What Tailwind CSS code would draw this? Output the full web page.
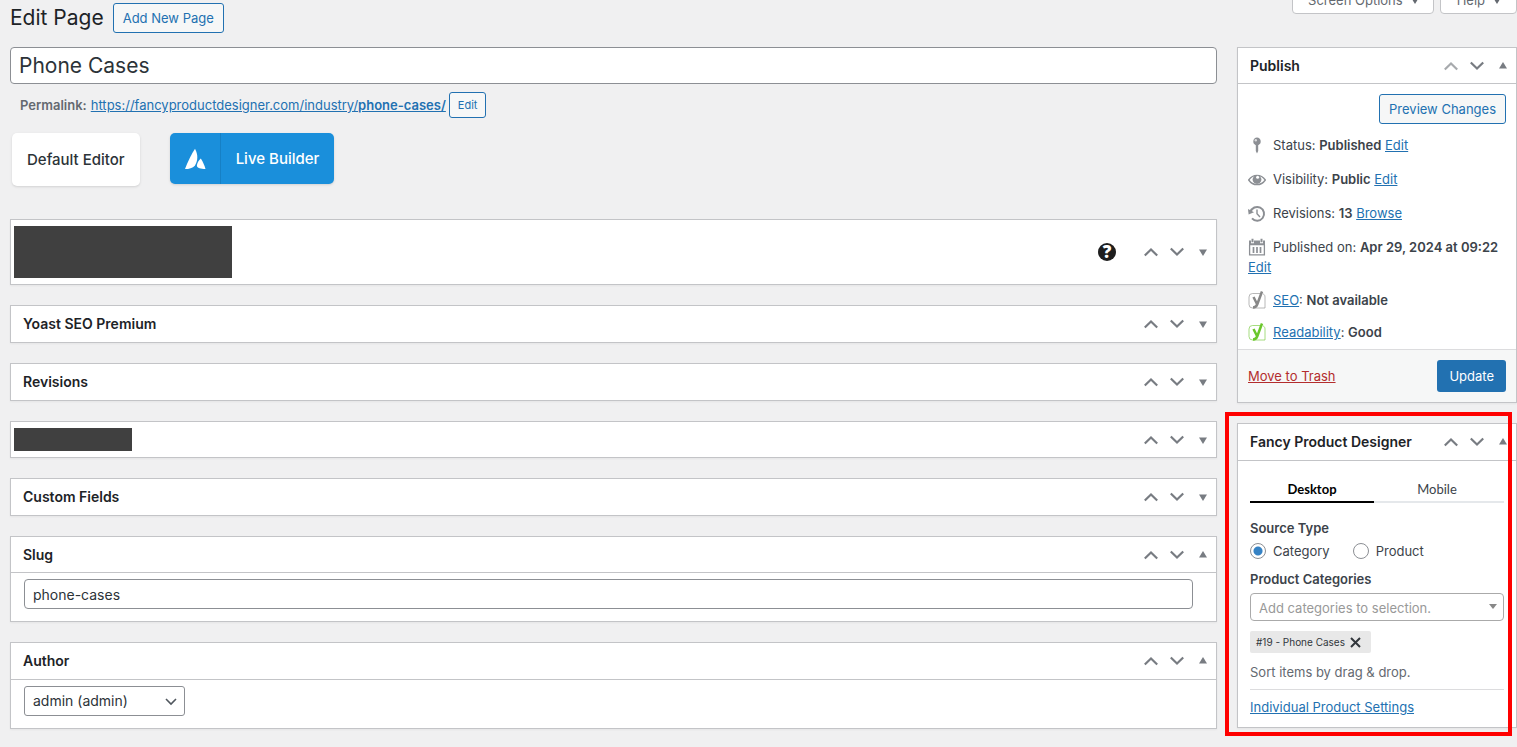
<!DOCTYPE html>
<html lang="en">
<head>
    <meta charset="utf-8">
    <meta name="viewport" content="width=device-width, initial-scale=1">
    <title>Edit Page</title>
    <script src="https://cdn.jsdelivr.net/npm/@tailwindcss/browser@4"></script>
</head>
<body class="min-h-screen overflow-x-hidden bg-[#f0f0f1] font-['Inter',sans-serif] text-[13px] leading-5 text-[#3c434a]">

    <!-- Icons -->
    <svg class="hidden">
        <symbol id="up" viewBox="0 0 14 10"><path d="M.8 8.500L7 2.500l6.200 6" fill="none" stroke="currentColor" stroke-width="2.200"/></symbol>
        <symbol id="down" viewBox="0 0 14 10"><path d="M.8 1.500L7 7.500l6.200-6" fill="none" stroke="currentColor" stroke-width="2.200"/></symbol>
        <symbol id="tri-up" viewBox="0 0 8 8"><path d="M4 0l4 6.500H0z" fill="currentColor"/></symbol>
        <symbol id="tri-down" viewBox="0 0 8 8"><path d="M4 8l4-6.500H0z" fill="currentColor"/></symbol>
        <symbol id="yoast" viewBox="0 0 18 20">
            <path d="M12 3.500H4.500A3.500 3.500 0 0 0 1 7v7.500A3.500 3.500 0 0 0 4.500 18H17V7c0-1.500-.6-2.500-1.800-3.100" fill="none" stroke="currentColor" stroke-opacity=".6"/>
            <path d="M5.500 7l3.500 7M14 1.500L9.300 14.200C8.500 16.500 7.300 17.400 5 17.400" fill="none" stroke="currentColor" stroke-width="2.500"/>
        </symbol>
    </svg>

    <div class="pl-[10px]">
        <header class="flex items-start justify-between">
            <div class="flex items-center gap-[9px] pt-[3px]">
                <h1 class="text-[21px] leading-[30px] text-[#1d2327]">Edit Page</h1>
                <a href="#" class="rounded-[3px] border border-[#2271b1] bg-[#f6f7f7] px-[9px] leading-[28px] text-[#2271b1]">Add New Page</a>
            </div>
            <div class="-mt-[15px] flex gap-[6px] text-[#646970]">
                <button class="flex h-[29px] items-center gap-2 rounded-b border border-[#c3c4c7] bg-white pr-[14px] pl-[15px]">Screen Options <svg class="size-2"><use href="#tri-down"/></svg></button>
                <button class="flex h-[29px] items-center gap-2 rounded-b border border-[#c3c4c7] bg-white pr-[15px] pl-4">Help <svg class="size-2"><use href="#tri-down"/></svg></button>
            </div>
        </header>

        <div class="mt-[14px] flex items-start gap-5">
            <main class="min-w-0 flex-1">
                <input type="text" aria-label="Title" value="Phone Cases" class="block h-[37px] w-full rounded border border-[#8c8f94] bg-white px-2 text-[21px] text-[#2c3338]">

                <div class="mt-2 flex items-center pl-[10px]">
                    <strong class="mr-1 font-semibold text-[#646970]">Permalink:</strong>
                    <a href="#" class="text-[#2271b1] underline">https://fancyproductdesigner.com/industry/<b class="font-semibold">phone-cases/</b></a>
                    <button class="ml-[3px] rounded-[3px] border border-[#2271b1] bg-[#f6f7f7] px-2 text-[11px] leading-6 text-[#2271b1]">Edit</button>
                </div>

                <div class="mt-[15px] flex items-start gap-[30px] pl-[2px] text-[15px] font-medium">
                    <button class="h-[53px] rounded-[5px] bg-white px-[15px] text-[#2c3338] shadow-sm">Default Editor</button>
                    <button class="flex h-[51px] items-center rounded-[5px] bg-[#1a8fdb] text-white shadow-sm">
                        <span class="flex h-full w-[51px] items-center justify-center border-r border-[#1680c5]">
                            <svg class="size-[22px]" viewBox="0 0 22 22" fill="currentColor"><path d="M11 .8C7.500 6 4 13.500 1 21c4 0 7.800-.8 9.800-3.300C14 13 14.200 6.500 11 .8z"/><path d="M16.800 10.500c-2 1.800-3.900 4.800-3.900 7.200 0 2.300 4 3.300 8.600 3.300-1-3.500-2.500-7.300-4.700-10.500z"/></svg>
                        </span>
                        <span class="px-[15px]">Live Builder</span>
                    </button>
                </div>

                <div class="mt-[33px] space-y-5 text-[#787c82]">
                    <section class="flex h-[66px] items-center border border-[#c3c4c7] bg-white pl-[3px] shadow-xs">
                        <div class="h-[52px] w-[218px] bg-[#404040]"></div>
                        <button class="mr-[22px] ml-auto size-[18px] rounded-full bg-[#1e1e1e] font-['Open_Sans',sans-serif] text-[17px] leading-[18px] font-extrabold text-white">?</button>
                        <button aria-label="Move up" class="flex w-[26px] justify-center"><svg class="h-[10px] w-[14px]"><use href="#up"/></svg></button>
                        <button aria-label="Move down" class="flex w-[26px] justify-center"><svg class="h-[10px] w-[14px]"><use href="#down"/></svg></button>
                        <button aria-label="Toggle panel" class="flex w-[26px] justify-center"><svg class="size-2"><use href="#tri-down"/></svg></button>
                    </section>

                    <section class="flex h-[38px] items-center border border-[#c3c4c7] bg-white pl-3 shadow-xs">
                        <h2 class="mr-auto text-sm font-semibold text-[#1d2327]">Yoast SEO Premium</h2>
                        <button aria-label="Move up" class="flex w-[26px] justify-center"><svg class="h-[10px] w-[14px]"><use href="#up"/></svg></button>
                        <button aria-label="Move down" class="flex w-[26px] justify-center"><svg class="h-[10px] w-[14px]"><use href="#down"/></svg></button>
                        <button aria-label="Toggle panel" class="flex w-[26px] justify-center"><svg class="size-2"><use href="#tri-down"/></svg></button>
                    </section>

                    <section class="flex h-[38px] items-center border border-[#c3c4c7] bg-white pl-3 shadow-xs">
                        <h2 class="mr-auto text-sm font-semibold text-[#1d2327]">Revisions</h2>
                        <button aria-label="Move up" class="flex w-[26px] justify-center"><svg class="h-[10px] w-[14px]"><use href="#up"/></svg></button>
                        <button aria-label="Move down" class="flex w-[26px] justify-center"><svg class="h-[10px] w-[14px]"><use href="#down"/></svg></button>
                        <button aria-label="Toggle panel" class="flex w-[26px] justify-center"><svg class="size-2"><use href="#tri-down"/></svg></button>
                    </section>

                    <section class="flex h-[37px] items-center border border-[#c3c4c7] bg-white pl-[3px] shadow-xs">
                        <div class="mr-auto h-[23px] w-[118px] bg-[#404040]"></div>
                        <button aria-label="Move up" class="flex w-[26px] justify-center"><svg class="h-[10px] w-[14px]"><use href="#up"/></svg></button>
                        <button aria-label="Move down" class="flex w-[26px] justify-center"><svg class="h-[10px] w-[14px]"><use href="#down"/></svg></button>
                        <button aria-label="Toggle panel" class="flex w-[26px] justify-center"><svg class="size-2"><use href="#tri-down"/></svg></button>
                    </section>

                    <section class="flex h-[38px] items-center border border-[#c3c4c7] bg-white pl-3 shadow-xs">
                        <h2 class="mr-auto text-sm font-semibold text-[#1d2327]">Custom Fields</h2>
                        <button aria-label="Move up" class="flex w-[26px] justify-center"><svg class="h-[10px] w-[14px]"><use href="#up"/></svg></button>
                        <button aria-label="Move down" class="flex w-[26px] justify-center"><svg class="h-[10px] w-[14px]"><use href="#down"/></svg></button>
                        <button aria-label="Toggle panel" class="flex w-[26px] justify-center"><svg class="size-2"><use href="#tri-down"/></svg></button>
                    </section>

                    <section class="border border-[#c3c4c7] bg-white shadow-xs">
                        <div class="flex h-[36px] items-center border-b border-[#c3c4c7] pl-3">
                            <h2 class="mr-auto text-sm font-semibold text-[#1d2327]">Slug</h2>
                            <button aria-label="Move up" class="flex w-[26px] justify-center"><svg class="h-[10px] w-[14px]"><use href="#up"/></svg></button>
                            <button aria-label="Move down" class="flex w-[26px] justify-center"><svg class="h-[10px] w-[14px]"><use href="#down"/></svg></button>
                            <button aria-label="Toggle panel" class="flex w-[26px] justify-center"><svg class="size-2"><use href="#tri-up"/></svg></button>
                        </div>
                        <div class="pt-[6px] pr-[23px] pb-3 pl-[13px]">
                            <input type="text" aria-label="Slug" value="phone-cases" class="block h-[30px] w-full rounded border border-[#8c8f94] bg-white px-2 text-sm text-[#2c3338]">
                        </div>
                    </section>

                    <section class="border border-[#c3c4c7] bg-white shadow-xs">
                        <div class="flex h-[37px] items-center border-b border-[#c3c4c7] pl-3">
                            <h2 class="mr-auto text-sm font-semibold text-[#1d2327]">Author</h2>
                            <button aria-label="Move up" class="flex w-[26px] justify-center"><svg class="h-[10px] w-[14px]"><use href="#up"/></svg></button>
                            <button aria-label="Move down" class="flex w-[26px] justify-center"><svg class="h-[10px] w-[14px]"><use href="#down"/></svg></button>
                            <button aria-label="Toggle panel" class="flex w-[26px] justify-center"><svg class="size-2"><use href="#tri-up"/></svg></button>
                        </div>
                        <div class="pt-[6px] pb-3 pl-[13px]">
                            <div class="relative w-[161px]">
                                <select aria-label="Author" class="block h-[30px] w-full appearance-none rounded-[3px] border border-[#8c8f94] bg-white px-2 text-sm text-[#2c3338]">
                                    <option>admin (admin)</option>
                                </select>
                                <svg class="pointer-events-none absolute top-[12px] right-2 h-[8px] w-[12px] text-[#50575e]" viewBox="0 0 12 8"><path d="M1 1l5 5 5-5" fill="none" stroke="currentColor" stroke-width="1.600"/></svg>
                            </div>
                        </div>
                    </section>
                </div>
            </main>

            <aside class="w-[280px] shrink-0 space-y-5">
                <!-- Publish -->
                <section class="border border-[#c3c4c7] bg-white shadow-xs">
                    <div class="flex h-[36px] items-center border-b border-[#c3c4c7] pl-3 text-[#787c82]">
                        <h2 class="mr-auto text-sm font-semibold text-[#1d2327]">Publish</h2>
                        <button aria-label="Move up" disabled class="flex w-[26px] justify-center text-[#a7aaad]"><svg class="h-[10px] w-[14px]"><use href="#up"/></svg></button>
                        <button aria-label="Move down" class="flex w-[26px] justify-center"><svg class="h-[10px] w-[14px]"><use href="#down"/></svg></button>
                        <button aria-label="Toggle panel" class="flex w-[26px] justify-center"><svg class="size-2"><use href="#tri-up"/></svg></button>
                    </div>
                    <div class="px-[10px] pt-[10px] pb-[7px]">
                        <div class="flex justify-end">
                            <button class="rounded-[3px] border border-[#2271b1] bg-[#f6f7f7] px-[9px] leading-[28px] text-[#2271b1]">Preview Changes</button>
                        </div>
                        <div class="mt-[11px] space-y-[14px]">
                            <p class="flex gap-[7px]">
                                <svg class="mt-px size-[18px] text-[#8c8f94]" viewBox="0 0 18 18" fill="currentColor"><path d="M9 1.500a4 4 0 0 1 1.200 7.700V15L9 17.500 7.800 15V9.200A4 4 0 0 1 9 1.500z"/><circle cx="7.800" cy="4.300" r="1.200" fill="#dcdcde"/></svg>
                                <span>Status: <b class="font-semibold">Published</b> <a href="#" class="text-[#2271b1] underline">Edit</a></span>
                            </p>
                            <p class="flex gap-[7px]">
                                <svg class="mt-[2px] size-[18px] text-[#8c8f94]" viewBox="0 0 18 18"><path d="M.7 9C5 2.800 13 2.800 17.300 9 13 15.200 5 15.200.7 9z" fill="none" stroke="currentColor" stroke-width="1.400"/><circle cx="9" cy="8.500" r="4.400" fill="currentColor"/><circle cx="9.600" cy="6.300" r="1.500" fill="#fff"/></svg>
                                <span>Visibility: <b class="font-semibold">Public</b> <a href="#" class="text-[#2271b1] underline">Edit</a></span>
                            </p>
                            <p class="flex gap-[7px]">
                                <svg class="mt-[2px] size-[18px] text-[#8c8f94]" viewBox="0 0 18 18"><path d="M2.500 7A6.900 6.900 0 1 1 4 13.400" fill="none" stroke="currentColor" stroke-width="2"/><path d="M0 4l.6 5.500L6 7.200z" fill="currentColor"/><path d="M9 4.500v4.300l3 3.200" fill="none" stroke="currentColor" stroke-width="1.400"/></svg>
                                <span>Revisions: <b class="font-semibold">13</b> <a href="#" class="text-[#2271b1] underline">Browse</a></span>
                            </p>
                            <div>
                                <p class="flex gap-[7px]">
                                    <svg class="mt-px size-[18px] text-[#8c8f94]" viewBox="0 0 18 18"><path d="M1.600 7v9.900h14.800V7" fill="none" stroke="currentColor" stroke-width="1.300"/><path d="M1 2.500h2v2.700h3V2.500h6v2.700h3V2.500h2v4.800H1z" fill="currentColor"/><path d="M4.500 4.200V.7M13.500 4.200V.7" stroke="currentColor" stroke-width="2"/><path d="M5.500 9v6M9 9v6M12.500 9v6" stroke="currentColor" stroke-width="1.700"/></svg>
                                    <span class="whitespace-nowrap">Published on: <b class="font-semibold">Apr 29, 2024 at 09:22</b></span>
                                </p>
                                <a href="#" class="text-[#2271b1] underline">Edit</a>
                            </div>
                        </div>
                        <div class="mt-[13px] space-y-3">
                            <p class="flex gap-[7px]">
                                <svg class="h-5 w-[18px] text-[#888]"><use href="#yoast"/></svg>
                                <span><a href="#" class="text-[#2271b1] underline">SEO</a>: <b class="font-semibold">Not available</b></span>
                            </p>
                            <p class="flex gap-[7px]">
                                <svg class="h-5 w-[18px] text-[#6bc72c]"><use href="#yoast"/></svg>
                                <span><a href="#" class="text-[#2271b1] underline">Readability</a>: <b class="font-semibold">Good</b></span>
                            </p>
                        </div>
                    </div>
                    <div class="flex items-center justify-between border-t border-[#dcdcde] bg-[#f6f7f7] p-[10px]">
                        <a href="#" class="text-[#b32d2e] underline">Move to Trash</a>
                        <button class="rounded-[3px] bg-[#2271b1] px-3 leading-8 text-white">Update</button>
                    </div>
                </section>

                <!-- Fancy Product Designer -->
                <section class="relative border border-[#c3c4c7] bg-white shadow-xs">
                    <div class="pointer-events-none absolute -top-[12px] right-[4px] -bottom-[9px] -left-[13px] border-4 border-[#ff0000]"></div>
                    <div class="flex h-[37px] items-center border-b border-[#c3c4c7] pl-3 text-[#787c82]">
                        <h2 class="mr-auto text-sm font-semibold text-[#1d2327]">Fancy Product Designer</h2>
                        <button aria-label="Move up" class="flex w-[26px] justify-center"><svg class="h-[10px] w-[14px]"><use href="#up"/></svg></button>
                        <button aria-label="Move down" class="flex w-[26px] justify-center"><svg class="h-[10px] w-[14px]"><use href="#down"/></svg></button>
                        <button aria-label="Toggle panel" class="flex w-[26px] justify-center"><svg class="size-2"><use href="#tri-up"/></svg></button>
                    </div>
                    <div class="px-3 pt-[15px] pb-[10px]">
                        <div class="flex font-['Lato',sans-serif]">
                            <button class="h-[27px] w-[124px] border-b-2 border-black font-bold text-black">Desktop</button>
                            <button class="h-[27px] flex-1 border-b-2 border-[#e5e8eb] pr-1">Mobile</button>
                        </div>
                        <fieldset class="mt-[15px]">
                            <legend class="font-semibold">Source Type</legend>
                            <div class="mt-[3px] flex gap-[23px]">
                                <label class="flex items-center gap-[7px]"><input type="radio" name="source" checked class="size-4 appearance-none rounded-full border border-[#8c8f94] bg-white bg-[radial-gradient(circle,#3582c4_4px,transparent_5px)]">Category</label>
                                <label class="flex items-center gap-[7px]"><input type="radio" name="source" class="size-4 appearance-none rounded-full border border-[#8c8f94] bg-white">Product</label>
                            </div>
                        </fieldset>
                        <label for="categories" class="mt-2 block font-semibold">Product Categories</label>
                        <div class="relative mt-1">
                            <select id="categories" class="block h-7 w-full appearance-none rounded border border-[#aaa] bg-white px-2 pt-px text-[#999]">
                                <option>Add categories to selection.</option>
                            </select>
                            <svg class="pointer-events-none absolute top-[11px] right-[7px] h-[5px] w-2 text-[#888]" viewBox="0 0 8 5"><path d="M0 0h8L4 5z" fill="currentColor"/></svg>
                        </div>
                        <div class="mt-[10px] flex">
                            <span class="flex h-[22px] items-center gap-[5px] rounded-xs bg-[#e8e8e8] pr-[10px] pl-[6px] text-[10px] text-[#32373c]">#19 - Phone Cases
                                <button aria-label="Remove"><svg class="size-[11px]" viewBox="0 0 11 11"><path d="M1 1l9 9M10 1l-9 9" stroke="currentColor" stroke-width="2"/></svg></button>
                            </span>
                        </div>
                        <p class="mt-[9px] text-[#646970]">Sort items by drag &amp; drop.</p>
                        <hr class="mt-[7px] mb-[7px] border-[#dcdcde]">
                        <a href="#" class="text-[#2271b1] underline">Individual Product Settings</a>
                    </div>
                </section>
            </aside>
        </div>
    </div>
</body>
</html>
